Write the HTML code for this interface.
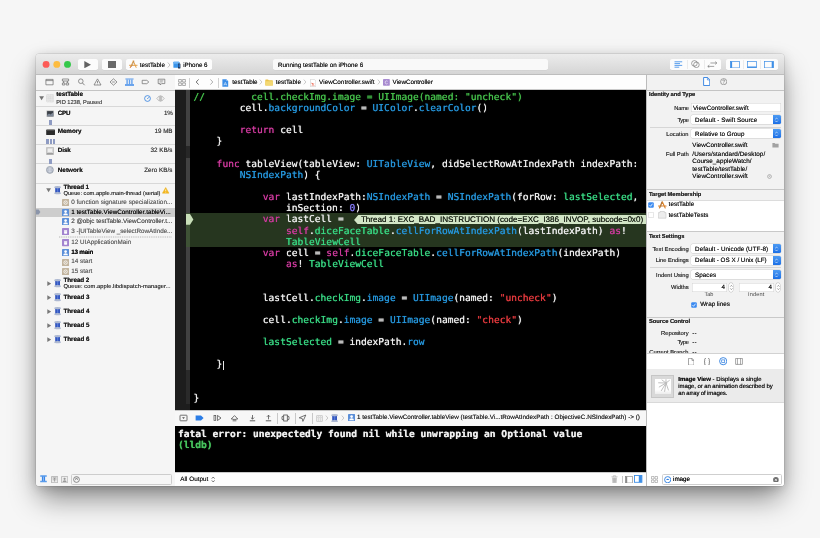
<!DOCTYPE html>
<html><head><meta charset="utf-8"><title>Xcode</title>
<style>
*{box-sizing:border-box;margin:0;padding:0}
html,body{width:820px;height:538px;overflow:hidden;background:#f6f6f6}
body{font-family:"Liberation Sans",sans-serif;font-size:6.3px;color:#262626;position:relative;text-rendering:geometricPrecision}
.win{position:absolute;left:35.7px;top:53.6px;width:748.3px;height:432.2px;border-radius:3px;background:#f5f5f5;
 box-shadow:0 0 0 .5px rgba(0,0,0,.15),0 15px 27px -3px rgba(0,0,0,.45),0 2px 12px rgba(0,0,0,.17)}
.win div,.win svg{position:absolute}
.clip{left:0;top:0;right:0;bottom:0;border-radius:3px;overflow:hidden;will-change:transform}
.btn{background:#fcfcfc;border-radius:1.8px;box-shadow:0 .3px .4px rgba(0,0,0,.12)}
.t{white-space:nowrap;line-height:8px;height:8px;text-shadow:0 0 .45px currentColor}
.b{font-weight:bold}
.g{color:#6e6e6e}
.r{text-align:right}
.code{font-family:"DejaVu Sans Mono","Liberation Mono",monospace;font-size:9.6px;line-height:11.17px;white-space:pre;color:#f0f0f0;text-shadow:0 0 .7px currentColor}
.code div{position:static;height:11.17px}
.k{color:#d03a9e}.c{color:#45c04b}.y{color:#2596dc}.p{color:#38d883}.n{color:#8177f2}.s{color:#e63a3e}
.pop{background:#fff;border-radius:1.6px;box-shadow:0 0 0 .4px rgba(0,0,0,.13),0 .3px .4px rgba(0,0,0,.1)}
.fld{background:#fff;box-shadow:inset 0 0 0 .5px #d2d2d2}

</style></head><body>
<div class="win"><div class="clip"><div class="pg" style="left:-35.7px;top:-53.6px;width:820px;height:538px">
<div style="left:35.7px;top:53.6px;width:748.3px;height:21.4px;background:linear-gradient(#ececec,#d5d5d5);border-bottom:.5px solid #bdbdbd"></div>
<svg style="left:40.0px;top:59.0px;" width="34" height="11" viewBox="0 0 34 11"><circle cx="6.1" cy="5.4" r="3.45" fill="#fc5b57"/><circle cx="16.8" cy="5.4" r="3.45" fill="#fdbc40"/><circle cx="27.5" cy="5.4" r="3.45" fill="#34c84a"/></svg>
<div class="btn" style="left:77.7px;top:58.6px;width:19.5px;height:11.0px;"></div>
<div class="btn" style="left:101.8px;top:58.6px;width:19.5px;height:11.0px;"></div>
<svg style="left:83.8px;top:60.6px;" width="7.4" height="7.4" viewBox="0 0 7.4 7.4"><path d="M0.3 0.1 L7 3.7 L0.3 7.3Z" fill="#636363"/></svg>
<div style="left:107.9px;top:61.0px;width:7.3px;height:6.5px;background:#696969"></div>
<div class="btn" style="left:126.0px;top:58.6px;width:85.5px;height:11.2px;"></div>
<svg style="left:128.8px;top:60.0px;" width="8.6" height="8.6" viewBox="0 0 8.6 8.6"><path d="M4.3 1 L1.5 7.4 M4.3 1 L7.1 7.4 M.5 5.3 H8.1" stroke="#e39a3c" stroke-width=".95" fill="none" stroke-linecap="round"/><path d="M5.2 .8 L2.4 6.8" stroke="#9a7a58" stroke-width=".55"/><path d="M1.2 7.6 L2 6.2" stroke="#d65a3a" stroke-width=".7"/></svg>
<div class="t " style="left:139.5px;top:62.0px;letter-spacing:-0.011px;">testTable</div>
<svg style="left:166.5px;top:61.6px;" width="4" height="6" viewBox="0 0 4 6"><path d="M0.8 0.5 L3 3 L0.8 5.5" stroke="#9a9a9a" stroke-width=".6" fill="none"/></svg>
<svg style="left:172.4px;top:60.6px;" width="8" height="8" viewBox="0 0 8 8"><rect x=".4" y=".8" width="6" height="6" rx=".5" fill="#3a94ea"/><rect x=".4" y=".8" width="6" height="2" rx=".5" fill="#6db3f4"/><rect x="5" y="2.6" width="2.4" height="4.8" rx=".4" fill="#1b2a3e"/><rect x="5.4" y="3.2" width="1.6" height="3.2" fill="#2a6fc2"/></svg>
<div class="t " style="left:183.0px;top:62.0px;letter-spacing:-0.107px;">iPhone 6</div>
<div class="btn" style="left:273.0px;top:58.6px;width:274.3px;height:11.2px;background:#f9f9f9"></div>
<div class="t " style="left:277.6px;top:62.0px;letter-spacing:-0.013px;">Running testTable on iPhone 6</div>
<div class="btn" style="left:669.5px;top:58.6px;width:51.0px;height:10.9px;"></div>
<div style="left:686.5px;top:59.4px;width:0.5px;height:9.4px;background:#ebebeb"></div>
<div style="left:703.5px;top:59.4px;width:0.5px;height:9.4px;background:#ebebeb"></div>
<svg style="left:673.5px;top:60.5px;" width="9" height="7" viewBox="0 0 9 7"><path d="M0.5 0.8 H8.2 M0.5 2.6 H6 M0.5 4.4 H8.2 M0.5 6.2 H5.2" stroke="#4a94ea" stroke-width=".9"/></svg>
<svg style="left:690.3px;top:60.0px;" width="9" height="8" viewBox="0 0 9 8"><circle cx="3.4" cy="3.4" r="2.8" fill="none" stroke="#666" stroke-width=".6"/><circle cx="5.4" cy="4.8" r="2.8" fill="none" stroke="#666" stroke-width=".6"/></svg>
<svg style="left:706.6px;top:60.3px;" width="10.6" height="7.6" viewBox="0 0 10.6 7.6"><path d="M3.4 2 H9.8 M9.8 2 L8.2 .6 M9.8 2 L8.2 3.4 M7.2 5.4 H.8 M.8 5.4 L2.4 4 M.8 5.4 L2.4 6.8" stroke="#666" stroke-width=".6" fill="none"/></svg>
<div class="btn" style="left:725.4px;top:58.6px;width:52.0px;height:10.9px;"></div>
<div style="left:742.6px;top:59.4px;width:0.5px;height:9.4px;background:#ebebeb"></div>
<div style="left:760.0px;top:59.4px;width:0.5px;height:9.4px;background:#ebebeb"></div>
<svg style="left:729.3px;top:60.4px;" width="10" height="7.4" viewBox="0 0 10 7.4"><rect x=".5" y=".5" width="9" height="6.4" fill="none" stroke="#3d8ee6" stroke-width=".7"/><rect x=".5" y=".5" width="1.6" height="6.4" fill="#3d8ee6"/></svg>
<svg style="left:746.5px;top:60.4px;" width="10" height="7.4" viewBox="0 0 10 7.4"><rect x=".5" y=".5" width="9" height="6.4" fill="none" stroke="#3d8ee6" stroke-width=".7"/><rect x=".5" y="5.5" width="9" height="1.4" fill="#3d8ee6"/></svg>
<svg style="left:763.7px;top:60.4px;" width="10" height="7.4" viewBox="0 0 10 7.4"><rect x=".5" y=".5" width="9" height="6.4" fill="none" stroke="#3d8ee6" stroke-width=".7"/><rect x="7.7" y=".5" width="1.8" height="6.4" fill="#3d8ee6"/></svg>
<div style="left:35.7px;top:75.0px;width:139.0px;height:411.0px;background:#f5f5f5"></div>
<div style="left:174.4px;top:75.0px;width:0.6px;height:411.0px;background:#bdbdbd"></div>
<div style="left:35.7px;top:89.3px;width:139.0px;height:0.5px;background:#c4c4c4"></div>
<svg style="left:45.0px;top:77.9px;" width="9" height="8" viewBox="0 0 9 8"><path d="M0.9 1.4 H8.1 V6.8 H0.9Z M0.9 2.6 H8.1" fill="none" stroke="#686868" stroke-width=".7"/></svg>
<svg style="left:60.5px;top:77.9px;" width="9" height="8" viewBox="0 0 9 8"><path d="M1.4 1 H7.6 V3 H1.4Z M2.6 3 V5 M6.4 3 V5 M1.4 5 H3.8 V7 H1.4Z M5.2 5 H7.6 V7 H5.2Z" fill="none" stroke="#686868" stroke-width=".7"/></svg>
<svg style="left:76.7px;top:77.9px;" width="9" height="8" viewBox="0 0 9 8"><circle cx="3.8" cy="3.2" r="2.3" fill="none" stroke="#686868" stroke-width=".7"/><path d="M5.5 5 L7.6 7.2" stroke="#686868" stroke-width=".8"/></svg>
<svg style="left:92.5px;top:77.9px;" width="9" height="8" viewBox="0 0 9 8"><path d="M4.5 0.9 L8 7 H1Z" fill="none" stroke="#686868" stroke-width=".7" stroke-linejoin="round"/><path d="M4.5 3 V5 M4.5 5.7 V6.3" stroke="#686868" stroke-width=".7"/></svg>
<svg style="left:108.5px;top:77.9px;" width="9" height="8" viewBox="0 0 9 8"><path d="M4.5 0.8 L8 4 L4.5 7.2 L1 4Z" fill="none" stroke="#686868" stroke-width=".7"/><path d="M3.2 4 H5.8" stroke="#686868" stroke-width=".7"/></svg>
<svg style="left:124.5px;top:77.9px;" width="9" height="8" viewBox="0 0 9 8"><path d="M0.4 1 H8.6" stroke="#4c92ea" stroke-width=".9"/><path d="M0 7 H9" stroke="#3f8ae8" stroke-width="1.3"/><path d="M2.1 1.5 V6.4 M4.5 1.5 V6.4 M6.9 1.5 V6.4" stroke="#62a0ee" stroke-width="1.4"/></svg>
<svg style="left:140.5px;top:77.9px;" width="9" height="8" viewBox="0 0 9 8"><path d="M1.2 2.3 H5.8 L7.8 4 L5.8 5.7 H1.2Z" fill="none" stroke="#686868" stroke-width=".7"/></svg>
<svg style="left:157.0px;top:77.9px;" width="9" height="8" viewBox="0 0 9 8"><path d="M1.2 1.2 H7.8 V5.6 H4.6 L3.2 7 V5.6 H1.2Z" fill="none" stroke="#686868" stroke-width=".7"/><path d="M2.6 2.8 H6.4 M2.6 4 H5.6" stroke="#686868" stroke-width=".5"/></svg>
<svg style="left:38.6px;top:96.0px;" width="5.2" height="4.4" viewBox="0 0 5.2 4.4"><path d="M0.2 0.3 H5 L2.6 4.2Z" fill="#737373"/></svg>
<svg style="left:45.6px;top:94.0px;" width="8.4" height="8.4" viewBox="0 0 8.4 8.4"><rect x=".2" y=".2" width="8" height="8" rx="1" fill="#ececec"/><path d="M.4 2.2 H8 M.4 4.2 H8 M.4 6.2 H8 M2.2 .4 V8 M4.2 .4 V8 M6.2 .4 V8" stroke="#c6c6c6" stroke-width=".5" stroke-dasharray=".7 .6"/><rect x=".3" y=".3" width="7.8" height="7.8" rx="1" fill="none" stroke="#cbcbcb" stroke-width=".45" stroke-dasharray=".7 .6"/></svg>
<div class="t b" style="left:56.0px;top:91.0px;letter-spacing:-0.065px;">testTable</div>
<div class="t " style="left:56.0px;top:99.0px;font-size:5.7px;letter-spacing:-0.017px;color:#555">PID 1238, Paused</div>
<svg style="left:143.2px;top:94.5px;" width="7" height="7" viewBox="0 0 7 7"><circle cx="3.5" cy="3.5" r="2.9" fill="none" stroke="#2f7fe0" stroke-width=".8"/><path d="M3.2 4 L5 2.2" stroke="#2f7fe0" stroke-width=".8"/></svg>
<svg style="left:155.8px;top:94.7px;" width="9" height="7" viewBox="0 0 9 7"><path d="M3.4 0.8 L0.8 3.5 L3.4 6.2Z M5.6 0.8 L8.2 3.5 L5.6 6.2Z" fill="none" stroke="#9a9a9a" stroke-width=".6"/><path d="M4.5 0.3 V6.7" stroke="#9a9a9a" stroke-width=".6"/></svg>
<div style="left:35.7px;top:106.0px;width:139.0px;height:0.5px;background:#d8d8d8"></div>
<div class="t b" style="left:57.5px;top:110.0px;letter-spacing:-0.266px;">CPU</div>
<div class="t r " style="left:-27.8px;width:200px;top:110.0px;letter-spacing:-0.255px;color:#4a4a4a">1%</div>
<div style="left:35.7px;top:124.6px;width:139.0px;height:0.5px;background:#d8d8d8"></div>
<div class="t b" style="left:57.5px;top:128.0px;letter-spacing:-0.093px;">Memory</div>
<div class="t r " style="left:-27.8px;width:200px;top:128.0px;letter-spacing:-0.041px;color:#4a4a4a">19 MB</div>
<div style="left:35.7px;top:143.8px;width:139.0px;height:0.5px;background:#d8d8d8"></div>
<div class="t b" style="left:57.5px;top:147.0px;letter-spacing:-0.103px;">Disk</div>
<div class="t r " style="left:-27.8px;width:200px;top:147.0px;letter-spacing:-0.009px;color:#4a4a4a">32 KB/s</div>
<div style="left:35.7px;top:162.9px;width:139.0px;height:0.5px;background:#d8d8d8"></div>
<div class="t b" style="left:57.5px;top:167.0px;letter-spacing:0.008px;">Network</div>
<div class="t r " style="left:-27.8px;width:200px;top:167.0px;letter-spacing:0.044px;color:#4a4a4a">Zero KB/s</div>
<div style="left:35.7px;top:182.4px;width:139.0px;height:0.5px;background:#d8d8d8"></div>
<svg style="left:45.6px;top:109.6px;" width="8.4" height="7.4" viewBox="0 0 8.4 7.4"><rect x=".3" y=".3" width="7.8" height="6.8" rx=".8" fill="#c9c9c9"/><rect x="1.1" y="1.1" width="6.2" height="5.2" fill="#3a3f47"/><path d="M1.1 5 L3 3.6 L4.4 4.4 L7.3 2.6 V6.3 H1.1Z" fill="#7d8796"/></svg>
<svg style="left:45.2px;top:128.4px;" width="9.2" height="6.4" viewBox="0 0 9.2 6.4"><rect x=".2" y=".4" width="8.8" height="5.6" rx=".6" fill="#2b2b2b"/><rect x=".8" y="1" width="7.6" height="1" fill="#4b4b4b"/></svg>
<svg style="left:45.8px;top:146.6px;" width="8" height="8.2" viewBox="0 0 8 8.2"><rect x=".4" y=".3" width="7.2" height="7.6" rx=".8" fill="#d9d9d9" stroke="#9c9c9c" stroke-width=".5"/><rect x="1.4" y="1.2" width="5.2" height="4" fill="#efefef" stroke="#b5b5b5" stroke-width=".3"/><rect x=".9" y="6.2" width="6.2" height="1.2" fill="#8f8f8f"/></svg>
<svg style="left:46.0px;top:166.0px;" width="7.8" height="7.8" viewBox="0 0 7.8 7.8"><circle cx="3.9" cy="3.9" r="3.5" fill="#aeb6c4" stroke="#7f8794" stroke-width=".5"/><path d="M3.9 .6 V7.2 M.6 3.9 H7.2 M1.6 1.8 Q3.9 3 6.2 1.8 M1.6 6 Q3.9 4.8 6.2 6" stroke="#e9edf3" stroke-width=".45" fill="none"/></svg>
<div style="left:48.6px;top:120.0px;width:2.6px;height:5.0px;background:#8e9bc2"></div>
<div style="left:45.9px;top:139.0px;width:2.3px;height:5.0px;background:#8e9bc2"></div>
<div style="left:49.2px;top:139.0px;width:2.3px;height:5.0px;background:#8e9bc2"></div>
<div style="left:52.5px;top:139.0px;width:2.3px;height:5.0px;background:#8e9bc2"></div>
<div style="left:48.6px;top:158.3px;width:2.6px;height:5.0px;background:#8e9bc2"></div>
<div style="left:35.7px;top:207.3px;width:139.0px;height:9.0px;background:#cdcdcd"></div>
<svg style="left:35.7px;top:208.6px;" width="5" height="6" viewBox="0 0 5 6"><path d="M0 0.4 H2.6 L4.4 3 L2.6 5.6 H0Z" fill="#8b95aa"/></svg>
<svg style="left:46.1px;top:187.8px;" width="5.2" height="4.4" viewBox="0 0 5.2 4.4"><path d="M0.2 0.3 H5 L2.6 4.2Z" fill="#787878"/></svg>
<svg style="left:53.6px;top:185.9px;" width="7.2" height="8.4" viewBox="0 0 7.2 8.4"><rect x="1.2" y="1.4" width="4.8" height="5.6" fill="#3154bd"/><rect x="2.9" y="1.4" width="1.4" height="5.6" fill="#5578d6"/><ellipse cx="3.6" cy="1.2" rx="3.4" ry="1.15" fill="#aeb9d2"/><ellipse cx="3.6" cy="7.2" rx="3.4" ry="1.15" fill="#aeb9d2"/></svg>
<div class="t b" style="left:63.2px;top:184.0px;letter-spacing:-0.094px;">Thread 1</div>
<div class="t " style="left:63.2px;top:190.0px;font-size:5.7px;letter-spacing:-0.016px;color:#3c3c3c">Queue: com.apple.main-thread (serial)</div>
<svg style="left:161.9px;top:187.0px;" width="7.4" height="6.8" viewBox="0 0 7.4 6.8"><path d="M3.7 .5 L7 6.2 H.4Z" fill="#f5b921" stroke="#e3a400" stroke-width=".4" stroke-linejoin="round"/><path d="M3.7 2.4 V4.3 M3.7 5 V5.5" stroke="#fff" stroke-width=".7"/></svg>
<svg style="left:61.2px;top:198.5px;" width="7.2" height="7.2" viewBox="0 0 7.2 7.2"><rect width="7.2" height="7.2" rx=".7" fill="#c2b49e"/><circle cx="3.6" cy="3.6" r="1.7" fill="none" stroke="#fff" stroke-width=".8"/><circle cx="3.6" cy="3.6" r=".5" fill="#fff"/></svg>
<div class="t " style="left:70.9px;top:199.0px;letter-spacing:0.035px;color:#6a6a6a">0 function signature specialization...</div>
<svg style="left:61.2px;top:208.8px;" width="7.2" height="7.2" viewBox="0 0 7.2 7.2"><rect width="7.2" height="7.2" rx=".7" fill="#5c8fd8"/><circle cx="3.6" cy="2.6" r="1.35" fill="#fff"/><path d="M1.2 6.3 Q1.2 4.2 3.6 4.2 Q6 4.2 6 6.3Z" fill="#fff"/></svg>
<div class="t " style="left:70.9px;top:209.0px;letter-spacing:0.018px;color:#141414">1 testTable.ViewController.tableVi...</div>
<svg style="left:61.2px;top:217.8px;" width="7.2" height="7.2" viewBox="0 0 7.2 7.2"><rect width="7.2" height="7.2" rx=".7" fill="#5c8fd8"/><circle cx="3.6" cy="2.6" r="1.35" fill="#fff"/><path d="M1.2 6.3 Q1.2 4.2 3.6 4.2 Q6 4.2 6 6.3Z" fill="#fff"/></svg>
<div class="t " style="left:70.9px;top:218.0px;letter-spacing:-0.001px;color:#5a5a5a">2 @objc testTable.ViewController.t...</div>
<svg style="left:61.2px;top:227.3px;" width="7.2" height="7.2" viewBox="0 0 7.2 7.2"><rect width="7.2" height="7.2" rx=".7" fill="#a384cf"/><path d="M2.1 2 H5.1 V5.4 Q3.6 6.2 2.1 5.4Z" fill="#fff"/><path d="M2.1 2.9 H5.1" stroke="#a384cf" stroke-width=".4"/></svg>
<div class="t " style="left:70.9px;top:228.0px;letter-spacing:-0.018px;color:#6a6a6a">3 -[UITableView _selectRowAtInde...</div>
<svg style="left:61.2px;top:239.0px;" width="7.2" height="7.2" viewBox="0 0 7.2 7.2"><rect width="7.2" height="7.2" rx=".7" fill="#a384cf"/><path d="M2.1 2 H5.1 V5.4 Q3.6 6.2 2.1 5.4Z" fill="#fff"/><path d="M2.1 2.9 H5.1" stroke="#a384cf" stroke-width=".4"/></svg>
<div class="t " style="left:70.9px;top:239.0px;letter-spacing:0.029px;color:#6a6a6a">12 UIApplicationMain</div>
<svg style="left:61.2px;top:248.6px;" width="7.2" height="7.2" viewBox="0 0 7.2 7.2"><rect width="7.2" height="7.2" rx=".7" fill="#5c8fd8"/><circle cx="3.6" cy="2.6" r="1.35" fill="#fff"/><path d="M1.2 6.3 Q1.2 4.2 3.6 4.2 Q6 4.2 6 6.3Z" fill="#fff"/></svg>
<div class="t b" style="left:70.9px;top:249.0px;letter-spacing:-0.222px;color:#141414">13 main</div>
<svg style="left:61.2px;top:258.2px;" width="7.2" height="7.2" viewBox="0 0 7.2 7.2"><rect width="7.2" height="7.2" rx=".7" fill="#c2b49e"/><circle cx="3.6" cy="3.6" r="1.7" fill="none" stroke="#fff" stroke-width=".8"/><circle cx="3.6" cy="3.6" r=".5" fill="#fff"/></svg>
<div class="t " style="left:70.9px;top:258.0px;letter-spacing:0.012px;color:#6a6a6a">14 start</div>
<svg style="left:61.2px;top:267.8px;" width="7.2" height="7.2" viewBox="0 0 7.2 7.2"><rect width="7.2" height="7.2" rx=".7" fill="#c2b49e"/><circle cx="3.6" cy="3.6" r="1.7" fill="none" stroke="#fff" stroke-width=".8"/><circle cx="3.6" cy="3.6" r=".5" fill="#fff"/></svg>
<div class="t " style="left:70.9px;top:268.0px;letter-spacing:0.012px;color:#6a6a6a">15 start</div>
<svg style="left:58.9px;top:235.6px;" width="113" height="2" viewBox="0 0 113 2"><path d="M0 1 H112.4" stroke="#9c9c9c" stroke-width=".8" stroke-dasharray=".9 .9"/></svg>
<svg style="left:46.5px;top:280.4px;" width="4.4" height="5.2" viewBox="0 0 4.4 5.2"><path d="M0.3 0.2 V5 L4.2 2.6Z" fill="#787878"/></svg>
<svg style="left:53.6px;top:278.8px;" width="7.2" height="8.4" viewBox="0 0 7.2 8.4"><rect x="1.2" y="1.4" width="4.8" height="5.6" fill="#3154bd"/><rect x="2.9" y="1.4" width="1.4" height="5.6" fill="#5578d6"/><ellipse cx="3.6" cy="1.2" rx="3.4" ry="1.15" fill="#aeb9d2"/><ellipse cx="3.6" cy="7.2" rx="3.4" ry="1.15" fill="#aeb9d2"/></svg>
<div class="t b" style="left:63.2px;top:277.0px;letter-spacing:-0.056px;">Thread 2</div>
<div class="t " style="left:63.2px;top:283.0px;font-size:5.7px;letter-spacing:0.090px;color:#3c3c3c">Queue: com.apple.libdispatch-manager...</div>
<svg style="left:46.5px;top:294.4px;" width="4.4" height="5.2" viewBox="0 0 4.4 5.2"><path d="M0.3 0.2 V5 L4.2 2.6Z" fill="#787878"/></svg>
<svg style="left:53.6px;top:292.8px;" width="7.2" height="8.4" viewBox="0 0 7.2 8.4"><rect x="1.2" y="1.4" width="4.8" height="5.6" fill="#3154bd"/><rect x="2.9" y="1.4" width="1.4" height="5.6" fill="#5578d6"/><ellipse cx="3.6" cy="1.2" rx="3.4" ry="1.15" fill="#aeb9d2"/><ellipse cx="3.6" cy="7.2" rx="3.4" ry="1.15" fill="#aeb9d2"/></svg>
<div class="t b" style="left:63.2px;top:294.0px;letter-spacing:-0.044px;">Thread 3</div>
<svg style="left:46.5px;top:308.4px;" width="4.4" height="5.2" viewBox="0 0 4.4 5.2"><path d="M0.3 0.2 V5 L4.2 2.6Z" fill="#787878"/></svg>
<svg style="left:53.6px;top:306.8px;" width="7.2" height="8.4" viewBox="0 0 7.2 8.4"><rect x="1.2" y="1.4" width="4.8" height="5.6" fill="#3154bd"/><rect x="2.9" y="1.4" width="1.4" height="5.6" fill="#5578d6"/><ellipse cx="3.6" cy="1.2" rx="3.4" ry="1.15" fill="#aeb9d2"/><ellipse cx="3.6" cy="7.2" rx="3.4" ry="1.15" fill="#aeb9d2"/></svg>
<div class="t b" style="left:63.2px;top:308.0px;letter-spacing:-0.044px;">Thread 4</div>
<svg style="left:46.5px;top:322.4px;" width="4.4" height="5.2" viewBox="0 0 4.4 5.2"><path d="M0.3 0.2 V5 L4.2 2.6Z" fill="#787878"/></svg>
<svg style="left:53.6px;top:320.8px;" width="7.2" height="8.4" viewBox="0 0 7.2 8.4"><rect x="1.2" y="1.4" width="4.8" height="5.6" fill="#3154bd"/><rect x="2.9" y="1.4" width="1.4" height="5.6" fill="#5578d6"/><ellipse cx="3.6" cy="1.2" rx="3.4" ry="1.15" fill="#aeb9d2"/><ellipse cx="3.6" cy="7.2" rx="3.4" ry="1.15" fill="#aeb9d2"/></svg>
<div class="t b" style="left:63.2px;top:322.0px;letter-spacing:-0.044px;">Thread 5</div>
<svg style="left:46.5px;top:336.4px;" width="4.4" height="5.2" viewBox="0 0 4.4 5.2"><path d="M0.3 0.2 V5 L4.2 2.6Z" fill="#787878"/></svg>
<svg style="left:53.6px;top:334.8px;" width="7.2" height="8.4" viewBox="0 0 7.2 8.4"><rect x="1.2" y="1.4" width="4.8" height="5.6" fill="#3154bd"/><rect x="2.9" y="1.4" width="1.4" height="5.6" fill="#5578d6"/><ellipse cx="3.6" cy="1.2" rx="3.4" ry="1.15" fill="#aeb9d2"/><ellipse cx="3.6" cy="7.2" rx="3.4" ry="1.15" fill="#aeb9d2"/></svg>
<div class="t b" style="left:63.2px;top:336.0px;letter-spacing:-0.044px;">Thread 6</div>
<svg style="left:40.0px;top:475.0px;" width="7" height="7.6" viewBox="0 0 7 7.6"><rect x="1.9" y="1" width="3.2" height="5.6" fill="#3b86e6"/><rect x=".2" y=".3" width="6.6" height="1.5" rx=".3" fill="#5a9cec"/><rect x=".2" y="5.8" width="6.6" height="1.5" rx=".3" fill="#5a9cec"/><path d="M3.5 1.8 V5.8" stroke="#a9cdf6" stroke-width=".7"/></svg>
<svg style="left:50.2px;top:475.2px;" width="7.2" height="7.2" viewBox="0 0 7.2 7.2"><rect x=".4" y=".4" width="6.4" height="6.4" rx=".6" fill="#ededed" stroke="#8e8e8e" stroke-width=".6"/><path d="M1.6 2 H5.6 M3.6 2 V5.6 M1.8 3.8 H2.8 M4.4 3.8 H5.4" stroke="#7c7c7c" stroke-width=".7"/></svg>
<svg style="left:60.5px;top:475.2px;" width="7.2" height="7.2" viewBox="0 0 7.2 7.2"><rect x=".4" y=".4" width="6.4" height="6.4" rx=".6" fill="#ededed" stroke="#9a9a9a" stroke-width=".6"/><circle cx="3.6" cy="2.8" r="1.1" fill="#9a9a9a"/><path d="M1.6 5.9 Q1.6 4.2 3.6 4.2 Q5.6 4.2 5.6 5.9Z" fill="#9a9a9a"/></svg>
<div style="left:70.7px;top:473.9px;width:100.8px;height:10.5px;background:#f6f6f6;border:.5px solid #cdcdcd;border-radius:1.5px"></div>
<svg style="left:73.0px;top:475.6px;" width="7" height="7" viewBox="0 0 7 7"><circle cx="3.5" cy="3.5" r="2.9" fill="none" stroke="#5e5e5e" stroke-width=".7"/><path d="M2.2 3.9 L3.5 2.6 L4.8 3.9" stroke="#5e5e5e" stroke-width=".7" fill="none"/><path d="M2 2.2 H5" stroke="#5e5e5e" stroke-width=".5"/></svg>
<div style="left:174.7px;top:75.0px;width:470.9px;height:14.6px;background:#fdfdfd;border-bottom:.5px solid #c9c9c9"></div>
<svg style="left:177.5px;top:78.9px;" width="8" height="7" viewBox="0 0 8 7"><path d="M.6 .5 H3.4 V3 H.6Z M4.6 .5 H7.4 V3 H4.6Z M.6 4 H3.4 V6.5 H.6Z M4.6 4 H7.4 V6.5 H4.6Z" fill="none" stroke="#6e6e6e" stroke-width=".55"/></svg>
<div style="left:188.8px;top:77.5px;width:0.5px;height:10.0px;background:#d0d0d0"></div>
<svg style="left:194.5px;top:78.7px;" width="5" height="6" viewBox="0 0 5 6"><path d="M3.6 .4 L1.2 3 L3.6 5.6" stroke="#4a4a4a" stroke-width=".8" fill="none"/></svg>
<svg style="left:208.8px;top:78.7px;" width="5" height="6" viewBox="0 0 5 6"><path d="M1.4 .4 L3.8 3 L1.4 5.6" stroke="#9b9b9b" stroke-width=".8" fill="none"/></svg>
<div style="left:217.7px;top:77.5px;width:0.5px;height:10.0px;background:#d0d0d0"></div>
<svg style="left:222.0px;top:78.4px;" width="6.6" height="8" viewBox="0 0 6.6 8"><path d="M.4 .3 H4.4 L6.2 2.1 V7.7 H.4Z" fill="#3b8ee8"/><path d="M4.4 .3 V2.1 H6.2Z" fill="#a9cdf5"/><path d="M3.3 3.2 L2 6.4 M3.3 3.2 L4.6 6.4 M1.7 5.3 H4.9" stroke="#dcebfb" stroke-width=".55" fill="none"/></svg>
<div class="t " style="left:231.9px;top:79.0px;letter-spacing:0.022px;">testTable</div>
<svg style="left:258.7px;top:78.9px;" width="4" height="6" viewBox="0 0 4 6"><path d="M.8 .6 L2.9 3 L.8 5.4" stroke="#a0a0a0" stroke-width=".55" fill="none"/></svg>
<svg style="left:264.8px;top:79.0px;" width="8.2" height="7" viewBox="0 0 8.2 7"><path d="M.3 1 Q.3 .4 .9 .4 H3 L3.8 1.3 H7.3 Q7.9 1.3 7.9 1.9 V6 Q7.9 6.6 7.3 6.6 H.9 Q.3 6.6 .3 6Z" fill="#e9c24a"/><path d="M.3 2.2 H7.9 V6 Q7.9 6.6 7.3 6.6 H.9 Q.3 6.6 .3 6Z" fill="#f3d873"/></svg>
<div class="t " style="left:275.4px;top:79.0px;letter-spacing:0.011px;">testTable</div>
<svg style="left:302.5px;top:78.9px;" width="4" height="6" viewBox="0 0 4 6"><path d="M.8 .6 L2.9 3 L.8 5.4" stroke="#a0a0a0" stroke-width=".55" fill="none"/></svg>
<svg style="left:309.4px;top:78.4px;" width="6.2" height="8" viewBox="0 0 6.2 8"><path d="M.4 .3 H4.2 L5.8 1.9 V7.7 H.4Z" fill="#fff" stroke="#b9b9b9" stroke-width=".45"/><path d="M1.6 3.4 Q3 5.2 4.6 4.8 Q3.8 5.8 2.6 5.6 Q2 5.4 1.6 4.6Z" fill="#e8523a"/><path d="M1.6 6.6 H4.6" stroke="#e8523a" stroke-width=".4"/></svg>
<div class="t " style="left:318.8px;top:79.0px;letter-spacing:0.029px;">ViewController.swift</div>
<svg style="left:376.2px;top:78.9px;" width="4" height="6" viewBox="0 0 4 6"><path d="M.8 .6 L2.9 3 L.8 5.4" stroke="#a0a0a0" stroke-width=".55" fill="none"/></svg>
<svg style="left:382.4px;top:79.0px;" width="6.8" height="6.8" viewBox="0 0 6.8 6.8"><rect width="6.8" height="6.8" rx=".8" fill="#a88bd0"/><path d="M4.6 2.3 Q3.9 1.7 3.2 1.9 Q2.2 2.2 2.2 3.4 Q2.2 4.6 3.2 4.9 Q3.9 5.1 4.6 4.5" stroke="#fff" stroke-width=".6" fill="none"/></svg>
<div class="t " style="left:392.3px;top:79.0px;letter-spacing:-0.053px;">ViewController</div>
<div style="left:174.7px;top:89.6px;width:470.9px;height:319.6px;background:#000"></div>
<div style="left:174.7px;top:89.6px;width:11.0px;height:319.6px;background:#1d1d1d"></div>
<div style="left:185.7px;top:89.6px;width:4.3px;height:319.6px;background:#424242"></div>
<div style="left:185.7px;top:145.2px;width:4.3px;height:12.3px;background:#272727"></div>
<div style="left:185.7px;top:369.7px;width:4.3px;height:34.2px;background:#2a2a2a"></div>
<div style="left:185.7px;top:403.9px;width:4.3px;height:5.3px;background:#1d1d1d"></div>
<div style="left:185.7px;top:213.0px;width:459.9px;height:33.4px;background:#26361f"></div>
<div style="left:185.7px;top:213.0px;width:4.3px;height:33.4px;background:#3f5236"></div>
<svg style="left:185.7px;top:213.3px;" width="8" height="11" viewBox="0 0 8 11"><path d="M0 0 H4 L7.4 5.4 L4 10.8 H0Z" fill="#c9dfb9"/></svg>
<svg style="left:353.2px;top:214.1px;" width="293" height="9.8" viewBox="0 0 293 9.8"><path d="M0 4.9 L4.2 0 H291.2 Q292.4 0 292.4 1.2 V8.6 Q292.4 9.8 291.2 9.8 H4.2Z" fill="#d2e5c6"/></svg>
<div class="t " style="left:360.6px;top:216.0px;font-size:8.1px;letter-spacing:-0.010px;color:#1e261a;height:10px">Thread 1: EXC_BAD_INSTRUCTION (code=EXC_I386_INVOP, subcode=0x0)</div>
<div class="code" style="left:193.2px;top:91.3px"><div><span class="c">//        cell.checkImg.image = UIImage(named: "uncheck")</span></div><div>        cell.<span class="y">backgroundColor</span> = <span class="y">UIColor</span>.<span class="y">clearColor</span>()</div><div></div><div>        <span class="k">return</span> cell</div><div>    }</div><div></div><div>    <span class="k">func</span> tableView(tableView: <span class="y">UITableView</span>, didSelectRowAtIndexPath indexPath:</div><div>        <span class="y">NSIndexPath</span>) {</div><div></div><div>            <span class="k">var</span> lastIndexPath:<span class="y">NSIndexPath</span> = <span class="y">NSIndexPath</span>(forRow: <span class="p">lastSelected</span>,</div><div>                inSection: <span class="n">0</span>)</div><div>            <span class="k">var</span> lastCell = </div><div>                <span class="k">self</span>.<span class="p">diceFaceTable</span>.<span class="y">cellForRowAtIndexPath</span>(lastIndexPath) <span class="k">as</span>!</div><div>                <span class="p">TableViewCell</span></div><div>            <span class="k">var</span> cell = <span class="k">self</span>.<span class="p">diceFaceTable</span>.<span class="y">cellForRowAtIndexPath</span>(indexPath)</div><div>                <span class="k">as</span>! <span class="p">TableViewCell</span></div><div></div><div></div><div>            lastCell.<span class="p">checkImg</span>.<span class="y">image</span> = <span class="y">UIImage</span>(named: <span class="s">"uncheck"</span>)</div><div></div><div>            cell.<span class="p">checkImg</span>.<span class="y">image</span> = <span class="y">UIImage</span>(named: <span class="s">"check"</span>)</div><div></div><div>            <span class="p">lastSelected</span> = indexPath.<span class="y">row</span></div><div></div><div>    }</div><div></div><div></div><div>}</div></div>
<div style="left:222.6px;top:360.2px;width:0.6px;height:9.6px;background:#e8e8e8"></div>
<div style="left:174.7px;top:409.2px;width:470.9px;height:16.4px;background:#f7f7f7;border-top:.5px solid #c4c4c4"></div>
<svg style="left:178.6px;top:413.5px;" width="9" height="8" viewBox="0 0 9 8"><rect x="1" y="1.2" width="7" height="5.6" rx=".6" fill="none" stroke="#505050" stroke-width=".8"/><path d="M3.1 3.2 H5.9 L4.5 5Z" fill="#505050"/></svg>
<svg style="left:195.1px;top:413.5px;" width="9" height="8" viewBox="0 0 9 8"><path d="M.6 1.5 H6 L8.6 4 L6 6.5 H.6Z" fill="#2b7de6"/></svg>
<svg style="left:212.8px;top:413.5px;" width="9" height="8" viewBox="0 0 9 8"><rect x="1" y="1.4" width="1.7" height="5.2" fill="none" stroke="#505050" stroke-width=".7"/><path d="M4.4 1.4 L8 4 L4.4 6.6Z" fill="none" stroke="#505050" stroke-width=".8"/></svg>
<svg style="left:230.1px;top:413.5px;" width="9" height="8" viewBox="0 0 9 8"><path d="M1.2 5 L4.5 1.6 L7.8 5 H6 V5.4 H3 V5Z" fill="none" stroke="#505050" stroke-width=".8" stroke-linejoin="round"/><path d="M2.6 6.8 H6.4" stroke="#505050" stroke-width=".8"/></svg>
<svg style="left:247.2px;top:413.5px;" width="9" height="8" viewBox="0 0 9 8"><path d="M4.5 1 V5 M2.9 3.6 L4.5 5.2 L6.1 3.6" fill="none" stroke="#505050" stroke-width=".8"/><path d="M1.8 6.8 H7.2" stroke="#505050" stroke-width=".9"/></svg>
<svg style="left:263.7px;top:413.5px;" width="9" height="8" viewBox="0 0 9 8"><path d="M4.5 5.4 V1.2 M2.9 2.8 L4.5 1.2 L6.1 2.8" fill="none" stroke="#505050" stroke-width=".8"/><path d="M1.8 6.8 H7.2" stroke="#505050" stroke-width=".9"/></svg>
<div style="left:276.7px;top:412.5px;width:0.5px;height:10.6px;background:#c8c8c8"></div>
<svg style="left:280.7px;top:413.5px;" width="9" height="8" viewBox="0 0 9 8"><rect x="2.7" y="1" width="3.6" height="6" fill="none" stroke="#505050" stroke-width=".8"/><path d="M2.7 2 L1 2.6 V5.4 L2.7 6 M6.3 2 L8 2.6 V5.4 L6.3 6" fill="none" stroke="#505050" stroke-width=".8"/></svg>
<div style="left:294.4px;top:412.5px;width:0.5px;height:10.6px;background:#c8c8c8"></div>
<svg style="left:298.1px;top:413.5px;" width="9" height="8" viewBox="0 0 9 8"><path d="M7.8 1 L1.2 3.8 L4.2 4.5 L4.9 7.4Z" fill="none" stroke="#505050" stroke-width=".8" stroke-linejoin="round"/></svg>
<div style="left:311.2px;top:412.5px;width:0.5px;height:10.6px;background:#c8c8c8"></div>
<div style="left:315.3px;top:414.2px;width:7.2px;height:7.2px;background:#ececec;border:.5px solid #d2d2d2;border-radius:1px;background-image:repeating-linear-gradient(90deg,transparent 0 1.5px,#dadada 1.5px 1.9px),repeating-linear-gradient(0deg,transparent 0 1.5px,#dadada 1.5px 1.9px)"></div>
<svg style="left:324.8px;top:414.5px;" width="4" height="6" viewBox="0 0 4 6"><path d="M.8 .6 L2.9 3 L.8 5.4" stroke="#a0a0a0" stroke-width=".55" fill="none"/></svg>
<svg style="left:331.0px;top:413.3px;" width="7.2" height="8.4" viewBox="0 0 7.2 8.4"><rect x="1.2" y="1.4" width="4.8" height="5.6" fill="#3154bd"/><rect x="2.9" y="1.4" width="1.4" height="5.6" fill="#5578d6"/><ellipse cx="3.6" cy="1.2" rx="3.4" ry="1.15" fill="#aeb9d2"/><ellipse cx="3.6" cy="7.2" rx="3.4" ry="1.15" fill="#aeb9d2"/></svg>
<svg style="left:340.6px;top:414.5px;" width="4" height="6" viewBox="0 0 4 6"><path d="M.8 .6 L2.9 3 L.8 5.4" stroke="#a0a0a0" stroke-width=".55" fill="none"/></svg>
<svg style="left:347.2px;top:413.9px;" width="7.2" height="7.2" viewBox="0 0 7.2 7.2"><rect width="7.2" height="7.2" rx=".7" fill="#5c8fd8"/><circle cx="3.6" cy="2.6" r="1.35" fill="#fff"/><path d="M1.2 6.3 Q1.2 4.2 3.6 4.2 Q6 4.2 6 6.3Z" fill="#fff"/></svg>
<div class="t " style="left:356.6px;top:414.0px;letter-spacing:0.008px;color:#333">1 testTable.ViewController.tableView (testTable.Vi...tRowAtIndexPath : ObjectiveC.NSIndexPath) -&gt; ()</div>
<div style="left:174.7px;top:425.6px;width:470.9px;height:45.5px;background:#000"></div>
<div class="code" style="left:177.6px;top:428.6px;font-weight:bold"><div>fatal error: unexpectedly found nil while unwrapping an Optional value</div><div style="color:#46c25c">(lldb)</div></div>
<div style="left:174.7px;top:471.1px;width:470.9px;height:15.0px;background:#fdfdfd;border-top:.5px solid #c9c9c9"></div>
<div class="t " style="left:180.0px;top:476.0px;letter-spacing:0.034px;color:#2a2a2a">All Output</div>
<svg style="left:210.2px;top:475.4px;" width="4.4" height="7" viewBox="0 0 4.4 7"><path d="M.8 2.6 L2.2 1 L3.6 2.6 M.8 4.4 L2.2 6 L3.6 4.4" stroke="#3c3c3c" stroke-width=".7" fill="none"/></svg>
<svg style="left:610.2px;top:474.6px;" width="7" height="8.4" viewBox="0 0 7 8.4"><path d="M.4 1.8 H6.6 M2.4 1.8 V.7 H4.6 V1.8" stroke="#b4b4b4" stroke-width=".7" fill="none"/><path d="M1 2.4 H6 L5.6 8 H1.4Z" fill="#c4c4c4"/><path d="M2.6 3.2 V7.2 M3.5 3.2 V7.2 M4.4 3.2 V7.2" stroke="#a9a9a9" stroke-width=".35"/></svg>
<div style="left:621.3px;top:475.4px;width:0.5px;height:7.0px;background:#c4c4c4"></div>
<svg style="left:624.6px;top:475.2px;" width="8" height="7.4" viewBox="0 0 8 7.4"><rect x=".4" y=".4" width="7.2" height="6.6" fill="#fff" stroke="#7d7d7d" stroke-width=".6"/><rect x=".4" y=".4" width="1.8" height="6.6" fill="#8a8a8a"/></svg>
<svg style="left:634.0px;top:475.0px;" width="8.4" height="7.8" viewBox="0 0 8.4 7.8"><rect x=".5" y=".5" width="7.4" height="6.8" fill="#fff" stroke="#3d8ee6" stroke-width=".9"/><rect x="4.8" y=".5" width="3.1" height="6.8" fill="#3d8ee6"/></svg>
<div style="left:645.6px;top:75.0px;width:138.4px;height:411.0px;background:#f2f2f2"></div>
<div style="left:645.6px;top:89.3px;width:138.4px;height:0.5px;background:#c4c4c4"></div>
<svg style="left:702.6px;top:76.9px;" width="7.4" height="9" viewBox="0 0 7.4 9"><path d="M.6 .5 H4.6 L6.8 2.7 V8.5 H.6Z" fill="#fff" stroke="#2f7fe0" stroke-width=".9" stroke-linejoin="round"/><path d="M4.4 .5 V2.9 H6.8" fill="none" stroke="#2f7fe0" stroke-width=".7"/></svg>
<svg style="left:719.2px;top:77.6px;" width="7.4" height="7.4" viewBox="0 0 7.4 7.4"><circle cx="3.7" cy="3.7" r="3.1" fill="none" stroke="#6e6e6e" stroke-width=".6"/><path d="M2.7 2.9 Q2.7 1.9 3.7 1.9 Q4.7 1.9 4.7 2.8 Q4.7 3.4 3.7 3.9 V4.5 M3.7 5.2 V5.8" stroke="#6e6e6e" stroke-width=".6" fill="none"/></svg>
<div class="t b" style="left:648.7px;top:91.0px;font-size:5.8px;letter-spacing:-0.068px;color:#333">Identity and Type</div>
<div class="t r " style="left:488.3px;width:200px;top:105.0px;font-size:5.8px;letter-spacing:-0.292px;color:#3a3a3a">Name</div>
<div class="fld" style="left:691.0px;top:103.0px;width:89.3px;height:8.8px;"></div>
<div class="t " style="left:692.6px;top:105.0px;letter-spacing:0.049px;">ViewController.swift</div>
<div class="t r " style="left:488.3px;width:200px;top:117.0px;font-size:5.8px;letter-spacing:-0.350px;color:#3a3a3a">Type</div>
<div class="pop" style="left:691.0px;top:115.0px;width:89.3px;height:8.4px;"></div>
<div style="left:772.5px;top:115.0px;width:7.8px;height:8.4px;background:linear-gradient(#4d9bf3,#1c6fe6);border-radius:0 1.6px 1.6px 0"></div>
<svg style="left:773.9px;top:116.2px;" width="5" height="6" viewBox="0 0 5 6"><path d="M1.2 2.3 L2.5 1 L3.8 2.3 M1.2 3.7 L2.5 5 L3.8 3.7" stroke="#fff" stroke-width=".6" fill="none"/></svg>
<div class="t " style="left:694.8px;top:117.0px;letter-spacing:0.063px;">Default - Swift Source</div>
<div style="left:650.0px;top:126.1px;width:130.3px;height:0.5px;background:#d6d6d6"></div>
<div class="t r " style="left:488.3px;width:200px;top:131.0px;font-size:5.8px;letter-spacing:0.047px;color:#3a3a3a">Location</div>
<div class="pop" style="left:691.0px;top:129.0px;width:89.3px;height:9.0px;"></div>
<div style="left:772.5px;top:129.0px;width:7.8px;height:9.0px;background:linear-gradient(#4d9bf3,#1c6fe6);border-radius:0 1.6px 1.6px 0"></div>
<svg style="left:773.9px;top:130.5px;" width="5" height="6" viewBox="0 0 5 6"><path d="M1.2 2.3 L2.5 1 L3.8 2.3 M1.2 3.7 L2.5 5 L3.8 3.7" stroke="#fff" stroke-width=".6" fill="none"/></svg>
<div class="t " style="left:694.8px;top:131.0px;letter-spacing:0.017px;">Relative to Group</div>
<div class="t " style="left:692.0px;top:142.0px;letter-spacing:0.019px;">ViewController.swift</div>
<svg style="left:771.6px;top:141.2px;" width="7" height="6" viewBox="0 0 7 6"><path d="M.4 1 H2.6 L3.2 1.8 H6.6 V5.6 H.4Z" fill="#a2a2a2"/></svg>
<div class="t r " style="left:488.3px;width:200px;top:151.0px;font-size:5.8px;letter-spacing:-0.032px;color:#3a3a3a">Full Path</div>
<div class="t " style="left:692.0px;top:151.0px;letter-spacing:0.077px;">/Users/standard/Desktop/</div>
<div class="t " style="left:692.0px;top:158.0px;letter-spacing:0.035px;">Course_appleWatch/</div>
<div class="t " style="left:692.0px;top:166.0px;letter-spacing:0.050px;">testTable/testTable/</div>
<div class="t " style="left:692.0px;top:173.0px;letter-spacing:0.029px;">ViewController.swift</div>
<svg style="left:767.0px;top:174.0px;" width="5" height="5" viewBox="0 0 5 5"><circle cx="2.5" cy="2.5" r="1.9" fill="none" stroke="#8a8a8a" stroke-width=".6"/><path d="M2.5 1.4 L3.4 2.5 H1.6Z" fill="#8a8a8a"/></svg>
<div style="left:645.6px;top:188.4px;width:138.4px;height:0.5px;background:#c9c9c9"></div>
<div class="t b" style="left:648.7px;top:191.0px;font-size:5.8px;letter-spacing:-0.044px;color:#333">Target Membership</div>
<div style="left:645.6px;top:199.5px;width:138.4px;height:31.3px;background:#fff;border-top:.5px solid #dcdcdc"></div>
<svg style="left:647.8px;top:201.4px;" width="6" height="6" viewBox="0 0 6 6"><rect x=".2" y=".2" width="5.6" height="5.6" rx="1.1" fill="#3b8af0"/><path d="M1.5 3.1 L2.6 4.3 L4.5 1.7" stroke="#fff" stroke-width=".8" fill="none"/></svg>
<svg style="left:657.6px;top:200.4px;" width="8.6" height="8" viewBox="0 0 8.6 8"><path d="M4.3 .8 L1.4 7 M4.3 .8 L7.2 7 M.5 5 H8.1" stroke="#d9822b" stroke-width="1.1" fill="none" stroke-linecap="round"/><path d="M3.7 .6 L2.5 6.6" stroke="#8a6a4a" stroke-width=".6"/></svg>
<div class="t " style="left:668.3px;top:201.0px;letter-spacing:0.044px;">testTable</div>
<svg style="left:647.8px;top:212.0px;" width="6" height="6" viewBox="0 0 6 6"><rect x=".3" y=".3" width="5.4" height="5.4" rx="1.1" fill="#fff" stroke="#c3c3c3" stroke-width=".5"/></svg>
<svg style="left:658.0px;top:211.0px;" width="8.4" height="7.6" viewBox="0 0 8.4 7.6"><path d="M.4 1.6 H2 V.5 H6.4 V1.6 H8 V7.2 H.4Z" fill="#ededed" stroke="#bdbdbd" stroke-width=".5"/></svg>
<div class="t " style="left:668.3px;top:212.0px;letter-spacing:-0.000px;">testTableTests</div>
<div style="left:645.6px;top:230.8px;width:138.4px;height:0.5px;background:#c9c9c9"></div>
<div class="t b" style="left:648.7px;top:233.0px;font-size:5.8px;letter-spacing:-0.051px;color:#333">Text Settings</div>
<div class="t r " style="left:488.3px;width:200px;top:246.0px;font-size:5.8px;letter-spacing:-0.017px;color:#3a3a3a">Text Encoding</div>
<div class="pop" style="left:691.0px;top:244.0px;width:89.3px;height:8.4px;"></div>
<div style="left:772.5px;top:244.0px;width:7.8px;height:8.4px;background:linear-gradient(#4d9bf3,#1c6fe6);border-radius:0 1.6px 1.6px 0"></div>
<svg style="left:773.9px;top:245.2px;" width="5" height="6" viewBox="0 0 5 6"><path d="M1.2 2.3 L2.5 1 L3.8 2.3 M1.2 3.7 L2.5 5 L3.8 3.7" stroke="#fff" stroke-width=".6" fill="none"/></svg>
<div class="t " style="left:694.8px;top:246.0px;letter-spacing:0.027px;">Default - Unicode (UTF-8)</div>
<div class="t r " style="left:488.3px;width:200px;top:257.0px;font-size:5.8px;letter-spacing:-0.053px;color:#3a3a3a">Line Endings</div>
<div class="pop" style="left:691.0px;top:256.0px;width:89.3px;height:8.4px;"></div>
<div style="left:772.5px;top:256.0px;width:7.8px;height:8.4px;background:linear-gradient(#4d9bf3,#1c6fe6);border-radius:0 1.6px 1.6px 0"></div>
<svg style="left:773.9px;top:257.2px;" width="5" height="6" viewBox="0 0 5 6"><path d="M1.2 2.3 L2.5 1 L3.8 2.3 M1.2 3.7 L2.5 5 L3.8 3.7" stroke="#fff" stroke-width=".6" fill="none"/></svg>
<div class="t " style="left:694.8px;top:257.0px;letter-spacing:-0.005px;">Default - OS X / Unix (LF)</div>
<div style="left:650.0px;top:266.6px;width:130.3px;height:0.5px;background:#d6d6d6"></div>
<div class="t r " style="left:488.3px;width:200px;top:272.0px;font-size:5.8px;letter-spacing:-0.005px;color:#3a3a3a">Indent Using</div>
<div class="pop" style="left:691.0px;top:270.0px;width:89.3px;height:9.0px;"></div>
<div style="left:772.5px;top:270.0px;width:7.8px;height:9.0px;background:linear-gradient(#4d9bf3,#1c6fe6);border-radius:0 1.6px 1.6px 0"></div>
<svg style="left:773.9px;top:271.5px;" width="5" height="6" viewBox="0 0 5 6"><path d="M1.2 2.3 L2.5 1 L3.8 2.3 M1.2 3.7 L2.5 5 L3.8 3.7" stroke="#fff" stroke-width=".6" fill="none"/></svg>
<div class="t " style="left:694.8px;top:272.0px;letter-spacing:-0.003px;">Spaces</div>
<div class="t r " style="left:488.3px;width:200px;top:284.0px;font-size:5.8px;letter-spacing:-0.020px;color:#3a3a3a">Widths</div>
<div class="fld" style="left:691.5px;top:282.3px;width:35.0px;height:9.0px;"></div>
<div class="t r " style="left:524.6px;width:200px;top:284.0px;">4</div>
<div style="left:728.3px;top:282.3px;width:4.8px;height:9.0px;background:#fff;border-radius:2.2px;box-shadow:0 0 0 .4px rgba(0,0,0,.25)"></div>
<svg style="left:728.3px;top:283.3px;" width="4.8" height="7" viewBox="0 0 4.8 7"><path d="M1.3 2.6 L2.4 1.4 L3.5 2.6 M1.3 4.4 L2.4 5.6 L3.5 4.4" stroke="#555" stroke-width=".55" fill="none"/></svg>
<div class="fld" style="left:738.5px;top:282.3px;width:35.0px;height:9.0px;"></div>
<div class="t r " style="left:571.6px;width:200px;top:284.0px;">4</div>
<div style="left:775.3px;top:282.3px;width:4.8px;height:9.0px;background:#fff;border-radius:2.2px;box-shadow:0 0 0 .4px rgba(0,0,0,.25)"></div>
<svg style="left:775.3px;top:283.3px;" width="4.8" height="7" viewBox="0 0 4.8 7"><path d="M1.3 2.6 L2.4 1.4 L3.5 2.6 M1.3 4.4 L2.4 5.6 L3.5 4.4" stroke="#555" stroke-width=".55" fill="none"/></svg>
<div class="t " style="left:704.1px;top:291.0px;font-size:5.6px;letter-spacing:-0.044px;color:#4a4a4a;text-shadow:none">Tab</div>
<div class="t " style="left:747.8px;top:291.0px;font-size:5.6px;letter-spacing:0.106px;color:#4a4a4a;text-shadow:none">Indent</div>
<svg style="left:691.0px;top:301.6px;" width="6" height="6" viewBox="0 0 6 6"><rect x=".2" y=".2" width="5.6" height="5.6" rx="1.1" fill="#3b8af0"/><path d="M1.5 3.1 L2.6 4.3 L4.5 1.7" stroke="#fff" stroke-width=".8" fill="none"/></svg>
<div class="t " style="left:699.9px;top:301.0px;">Wrap lines</div>
<div style="left:645.6px;top:316.1px;width:138.4px;height:0.5px;background:#c9c9c9"></div>
<div class="t b" style="left:648.7px;top:318.0px;font-size:5.8px;letter-spacing:-0.055px;color:#333">Source Control</div>
<div class="t r " style="left:488.3px;width:200px;top:330.0px;font-size:5.8px;letter-spacing:-0.022px;color:#3a3a3a">Repository</div>
<div class="t " style="left:692.0px;top:330.0px;">--</div>
<div class="t r " style="left:488.3px;width:200px;top:339.0px;font-size:5.8px;letter-spacing:-0.350px;color:#3a3a3a">Type</div>
<div class="t " style="left:692.0px;top:339.0px;">--</div>
<div class="t r " style="left:488.3px;width:200px;top:349.0px;font-size:5.8px;letter-spacing:0.006px;color:#3a3a3a">Current Branch</div>
<div class="t " style="left:692.0px;top:349.0px;">--</div>
<div style="left:645.6px;top:352.6px;width:138.4px;height:133.3px;background:#fff;border-top:.5px solid #d2d2d2"></div>
<svg style="left:687.4px;top:357.3px;" width="6.6" height="7.6" viewBox="0 0 6.6 7.6"><path d="M.5 .4 H4 L6 2.4 V7.2 H.5Z M4 .4 V2.4 H6" fill="none" stroke="#6a6a6a" stroke-width=".6"/></svg>
<svg style="left:703.0px;top:357.3px;" width="8" height="7.6" viewBox="0 0 8 7.6"><path d="M3 .5 H2.4 Q1.7 .5 1.7 1.3 V3 Q1.7 3.8 1 3.8 Q1.7 3.8 1.7 4.6 V6.3 Q1.7 7.1 2.4 7.1 H3 M5 .5 H5.6 Q6.3 .5 6.3 1.3 V3 Q6.3 3.8 7 3.8 Q6.3 3.8 6.3 4.6 V6.3 Q6.3 7.1 5.6 7.1 H5" fill="none" stroke="#5c5c5c" stroke-width=".7"/></svg>
<svg style="left:718.5px;top:356.9px;" width="8.4" height="8.4" viewBox="0 0 8.4 8.4"><circle cx="4.2" cy="4.2" r="3.6" fill="none" stroke="#2f7fe0" stroke-width=".9"/><rect x="2.7" y="2.9" width="3" height="2.6" fill="none" stroke="#2f7fe0" stroke-width=".7"/></svg>
<svg style="left:735.0px;top:357.7px;" width="8" height="6.8" viewBox="0 0 8 6.8"><rect x=".4" y=".4" width="7.2" height="6" rx=".5" fill="none" stroke="#6a6a6a" stroke-width=".6"/><path d="M2.4 .4 V6.4 M5.6 .4 V6.4" stroke="#6a6a6a" stroke-width=".6"/></svg>
<div style="left:645.6px;top:369.0px;width:138.4px;height:33.6px;background:#ebebeb;border-bottom:1px solid #d9d9d9"></div>
<div style="left:650.9px;top:374.1px;width:23.1px;height:23.6px;background:#d9d9d9;border:.5px solid #c6c6c6"></div>
<div style="left:654.5px;top:378.5px;width:16.1px;height:15.3px;background:linear-gradient(#fff 70%,#ececec)"></div>
<svg style="left:654.5px;top:378.5px;" width="16.1" height="15.3" viewBox="0 0 16.1 15.3"><path d="M11 4 L6.4 11.6 M11 4 L9.6 12.4 M11 4 L13.4 11 M11 4 L4.2 8 M11 4 L3.6 3.8 M11 4 L7 1 M11 4 L14.4 1.4 M11 4 L11 .6" stroke="#b9b9b9" stroke-width=".9" fill="none" stroke-linecap="round"/><circle cx="11" cy="4" r="1.3" fill="#bdbdbd"/></svg>
<div class="t " style="left:677.9px;top:376.0px;font-size:6px;letter-spacing:0.012px;color:#1c1c1c"><span class="b">Image View</span> - Displays a single</div>
<div class="t " style="left:677.9px;top:383.0px;font-size:6px;letter-spacing:-0.067px;color:#1c1c1c">image, or an animation described by</div>
<div class="t " style="left:677.9px;top:390.0px;font-size:6px;letter-spacing:-0.119px;color:#1c1c1c">an array of images.</div>
<svg style="left:650.4px;top:475.6px;" width="7" height="7" viewBox="0 0 7 7"><path d="M.5 .5 H3 V3 H.5Z M4 .5 H6.5 V3 H4Z M.5 4 H3 V6.5 H.5Z M4 4 H6.5 V6.5 H4Z" fill="none" stroke="#8d8d8d" stroke-width=".55"/></svg>
<div style="left:661.6px;top:473.7px;width:119.9px;height:10.6px;background:#fff;border:.5px solid #cfcfcf;border-radius:1.6px"></div>
<svg style="left:663.6px;top:475.4px;" width="7.4" height="7.4" viewBox="0 0 7.4 7.4"><circle cx="3.7" cy="3.7" r="3.1" fill="none" stroke="#2f7fe0" stroke-width=".9"/><path d="M2.1 3.9 Q3.7 1.4 5.3 3.9Z" fill="#2f7fe0"/></svg>
<div class="t " style="left:672.8px;top:476.0px;font-size:6.3px;letter-spacing:-0.091px;color:#111">image</div>
<svg style="left:772.4px;top:476.2px;" width="5.8" height="5.8" viewBox="0 0 5.8 5.8"><circle cx="2.9" cy="2.9" r="2.8" fill="#6f6f6f"/><g transform="translate(.2 .2)"><path d="M1.7 1.7 L3.7 3.7 M3.7 1.7 L1.7 3.7" stroke="#fff" stroke-width=".7"/></g></svg>
<div style="left:645.5px;top:75.0px;width:0.6px;height:411.0px;background:#bcbcbc"></div>
</div></div></div>
</body></html>
